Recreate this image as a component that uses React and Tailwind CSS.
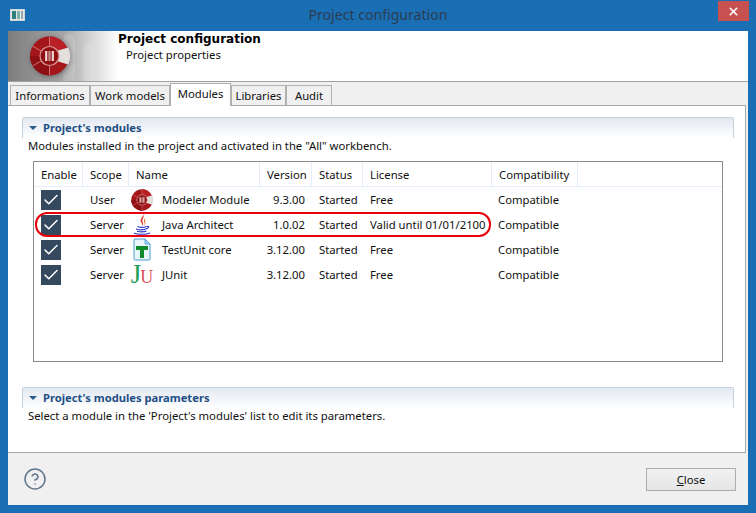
import React from 'react';
import { Check, X, CircleHelp } from 'lucide-react';

const columns = [
  { label: 'Enable', w: 'w-[49px]' },
  { label: 'Scope', w: 'w-[46px]' },
  { label: 'Name', w: 'w-[131px]' },
  { label: 'Version', w: 'w-[52px]' },
  { label: 'Status', w: 'w-[51px]' },
  { label: 'License', w: 'w-[129px]' },
  { label: 'Compatibility', w: 'w-[86px]' },
];

const modules = [
  { scope: 'User', icon: 'modeler', name: 'Modeler Module', version: '9.3.00', license: 'Free' },
  { scope: 'Server', icon: 'java', name: 'Java Architect', version: '1.0.02', license: 'Valid until 01/01/2100' },
  { scope: 'Server', icon: 'testunit', name: 'TestUnit core', version: '3.12.00', license: 'Free' },
  { scope: 'Server', icon: 'junit', name: 'JUnit', version: '3.12.00', license: 'Free' },
];

const tabs = [
  { label: 'Informations', w: 'w-[80px]' },
  { label: 'Work models', w: 'w-[80px]' },
  { label: 'Modules', w: 'w-[61px]', active: true },
  { label: 'Libraries', w: 'w-[55px]' },
  { label: 'Audit', w: 'w-[46px]' },
];

const LogoShapes = () => (
  <>
    <circle cx="20" cy="20" r="19.5" fill="#a5161a" />
    <path d="M20 0.5A19.5 19.5 0 0 1 39.5 20H20Z" fill="#b92025" />
    <path d="M0.5 20A19.5 19.5 0 0 0 20 39.5V20Z" fill="#8e1013" />
    <g stroke="#d98a88" strokeWidth="0.8">
      <path d="M20 1V10" />
      <path d="M20 30V39" />
      <path d="M3 10L11.5 15" />
      <path d="M3 30L11.5 25" />
    </g>
    <path d="M27 15L38.7 11.5A19.5 19.5 0 0 1 38.7 28.5L27 25Z" fill="#e4dfdd" />
    <circle cx="20" cy="20" r="9.5" fill="#8f1114" stroke="#dc9a98" strokeWidth="1.2" />
    <rect x="15.6" y="15" width="2.2" height="10" fill="#f1d6d4" />
    <rect x="18.9" y="15" width="2.2" height="10" fill="#c98f8d" />
    <rect x="22.2" y="15" width="2.2" height="10" fill="#f1d6d4" />
  </>
);

const ModelerLogo = ({ size }) => (
  <svg width={size} height={size} viewBox="0 0 40 40">
    <LogoShapes />
  </svg>
);

// banner artwork: grey fade, pale stripes, logo with soft shadow
const BannerArt = () => (
  <svg width="110" height="50" viewBox="0 0 110 50" className="shrink-0">
    <defs>
      <linearGradient id="fade" x1="0" x2="1" y1="0" y2="0">
        <stop offset="0" stopColor="#7d7d7d" />
        <stop offset="0.5" stopColor="#a6a6a6" />
        <stop offset="0.75" stopColor="#d4d4d4" />
        <stop offset="1" stopColor="#ffffff" />
      </linearGradient>
      <filter id="soft" x="-30%" y="-30%" width="160%" height="160%">
        <feGaussianBlur stdDeviation="2.5" />
      </filter>
    </defs>
    <rect width="110" height="50" fill="url(#fade)" />
    <rect x="55" y="3" width="12" height="60" rx="6" fill="#fff" opacity="0.14" />
    <rect x="75" y="12" width="12" height="50" rx="6" fill="#fff" opacity="0.14" />
    <circle cx="42.5" cy="26" r="20" fill="#333" opacity="0.45" filter="url(#soft)" />
    <g transform="translate(21.5 5)">
      <LogoShapes />
    </g>
  </svg>
);

const JavaIcon = () => (
  <svg width="18" height="24" viewBox="0 0 18 24">
    <path d="M10 1C11 4 6 6 8 9C9 10.5 9.5 11.5 9 13C12 10.5 8.5 9 9.5 6.5C10 5 11.5 4 10 1Z" fill="#d8352a" />
    <path d="M12.5 5C10.5 6.5 10.5 8.5 11.5 10C12 11 11.5 12 11 13C13.5 11 12 9 12 7.5C12 6.5 12.5 6 12.5 5Z" fill="#e8702a" />
    <g fill="none" stroke="#2a35c9" strokeWidth="1.1">
      <path d="M4.5 13.5C7 14.5 11 14.5 13.5 13.5" />
      <path d="M3 16C6 17 11 17 14 15.5C16.5 14.5 16 13 14 13.5" />
      <path d="M4 18.2C7 19 11 19 13.5 18" />
      <path d="M1 20.2C5 21.7 13 21.7 17 20" />
      <path d="M5.5 23C8 23.5 11 23.4 13 22.6" />
    </g>
  </svg>
);

const TestUnitIcon = () => (
  <svg width="18" height="23" viewBox="0 0 18 23">
    <path d="M1 2Q1 1 2 1H12L17 6V21Q17 22 16 22H2Q1 22 1 21Z" fill="#eaf5fb" stroke="#4f9bd0" strokeWidth="1" />
    <path d="M12 1V6H17Z" fill="#a9d2ec" stroke="#4f9bd0" strokeWidth="0.8" />
    <path d="M3 8H15V12H11V20H7V12H3Z" fill="#0f8a2b" />
  </svg>
);

const JUnitIcon = () => (
  <span className="flex items-baseline font-['Liberation_Serif',serif] leading-none">
    <span className="text-[#1f9e5a] text-[27px]">J</span>
    <span className="text-[#d9505f] text-[18px] -ml-[1px]">U</span>
  </span>
);

const icons = {
  modeler: <ModelerLogo size={22} />,
  java: <JavaIcon />,
  testunit: <TestUnitIcon />,
  junit: <JUnitIcon />,
};

const SectionHeader = ({ title }) => (
  <div className="h-[21px] ml-[14px] mr-[11px] border-t border-x border-[#c5d2de] rounded-t-[2px] bg-gradient-to-b from-[#e2e8f1] to-white flex items-center pl-[6px] gap-[6px]">
    <span className="w-0 h-0 border-x-[4px] border-x-transparent border-t-[4px] border-t-[#2b5a8c]"></span>
    <span className="text-[#1f4f85] font-bold text-[11.2px]">{title}</span>
  </div>
);

export default function App() {
  return (
    <div className="w-[756px] h-[513px] bg-[#1a6eb3] flex flex-col px-[8px] pb-[8px] font-['Noto_Sans',sans-serif] text-[11.3px] text-[#111] overflow-hidden">
      {/* title bar */}
      <div className="h-[31px] flex items-center relative shrink-0">
        <div className="w-[15px] h-[12px] ml-[2px] -mt-[2px] bg-[#e6e9ea] border border-[#cfd6d8] flex gap-[1px] p-[1px]">
          <span className="w-[5px] bg-[#2f7f7a]"></span>
          <span className="w-[3px] bg-[#7fb5a8]"></span>
          <span className="w-[3px] bg-[#9aa6ae]"></span>
        </div>
        <span className="flex-1 text-center text-[14.1px] text-[#2a3d52] -ml-[17px] -mt-[1px]">Project configuration</span>
        <div className="absolute right-0 top-[1px] w-[31px] h-[20px] -mr-[1px] bg-[#c75050] flex items-center justify-center">
          <X size={13} strokeWidth={3} className="text-white" />
        </div>
      </div>

      <div className="flex-1 bg-[#f0f0f0] flex flex-col min-h-0">
        {/* banner */}
        <div className="h-[50px] bg-white border-b border-[#a0a0a0] flex shrink-0 box-content">
          <BannerArt />
          <div className="leading-none">
            <div className="font-['DejaVu_Sans',sans-serif] font-bold text-[12px] text-black mt-[2px]">Project configuration</div>
            <div className="pl-[8px] mt-[4px] text-[#111]">Project properties</div>
          </div>
        </div>

        {/* tabs */}
        <div className="h-[23px] flex items-end pl-[2px] shrink-0">
          {tabs.map(tab => (
            <div
              key={tab.label}
              className={tab.active
                ? `${tab.w} h-[23px] -mb-[1px] bg-white border-x border-t border-[#b0b0b0] text-center leading-[20px] z-10 relative`
                : `${tab.w} h-[20px] bg-[#f0f0f0] border-r border-t border-l border-[#b0b0b0] text-center leading-[20px]`}
            >
              {tab.label}
            </div>
          ))}
        </div>

        {/* tab body */}
        <div className="h-[348px] bg-white border border-[#a8a8a8] border-l-0 mr-[2px] pt-[11px] shrink-0">
          <SectionHeader title="Project's modules" />
          <div className="pl-[20px] leading-[15px] h-[23px]">Modules installed in the project and activated in the "All" workbench.</div>

          <div className="relative ml-[25px] w-[690px] h-[201px] border border-[#8a8a8a]">
            <div className="flex h-[25px] border-b border-[#e3eef8]">
              {columns.map(col => (
                <div key={col.label} className={`${col.w} border-r border-[#e3eef8] pl-[7px] leading-[25px]`}>{col.label}</div>
              ))}
            </div>
            {modules.map(mod => (
              <div key={mod.name} className="flex h-[25px] items-center">
                <div className="w-[49px] pl-[7px]">
                  <div className="w-[20px] h-[20px] bg-[#34495e] flex items-center justify-center">
                    <Check size={18} strokeWidth={2} className="text-white" />
                  </div>
                </div>
                <div className="w-[46px] pl-[7px] mt-[2px]">{mod.scope}</div>
                <div className="w-[131px] flex items-center">
                  <div className="w-[26px] mr-[7px] flex justify-center">{icons[mod.icon]}</div>
                  <span className="mt-[2px]">{mod.name}</span>
                </div>
                <div className="w-[52px] text-right pr-[7px] mt-[2px]">{mod.version}</div>
                <div className="w-[51px] pl-[7px] mt-[2px]">Started</div>
                <div className="w-[129px] pl-[7px] whitespace-nowrap mt-[2px]">{mod.license}</div>
                <div className="w-[86px] pl-[6px] mt-[2px]">Compatible</div>
              </div>
            ))}
            {/* highlight around the Java Architect row */}
            <div className="absolute left-[1px] top-[50px] w-[456px] h-[25px] border-2 border-[#e8000d] rounded-[12px]"></div>
          </div>

          <div className="h-[25px]"></div>
          <SectionHeader title="Project's modules parameters" />
          <div className="pl-[20px] leading-[15px]">Select a module in the 'Project's modules' list to edit its parameters.</div>
        </div>

        {/* footer */}
        <div className="flex-1 flex items-center justify-between pl-[15px] pr-[12px]">
          <CircleHelp size={24} strokeWidth={1.5} className="text-[#62758c]" />
          <div className="w-[90px] h-[23px] border border-[#adadad] bg-gradient-to-b from-[#f2f2f2] to-[#e5e5e5] text-center leading-[21px]">
            <span className="underline">C</span>lose
          </div>
        </div>
      </div>
    </div>
  );
}
